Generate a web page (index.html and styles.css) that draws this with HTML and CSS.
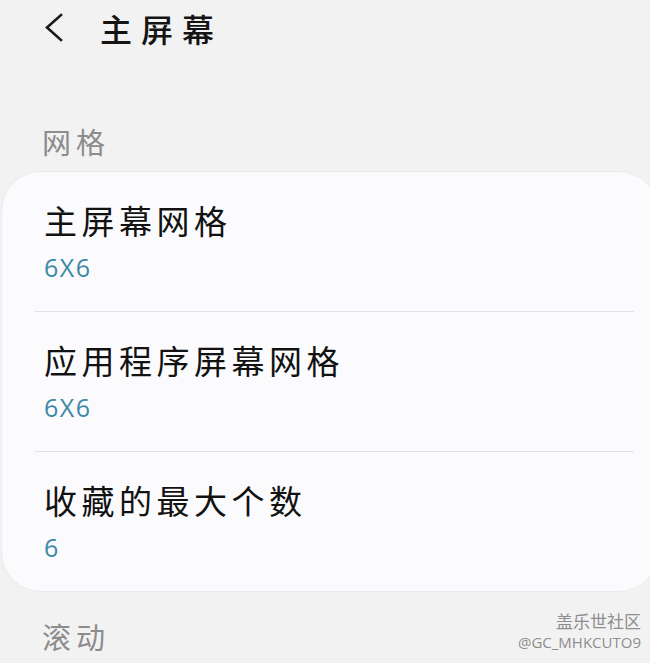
FILE: index.html
```html
<!DOCTYPE html>
<html lang="zh-CN">

<head>
    <meta charset="UTF-8">
    <meta name="viewport" content="width=device-width, initial-scale=1.0">
    <title>主屏幕</title>
    <link rel="stylesheet" href="styles.css">
</head>

<body>
    <header class="top-bar">
        <svg class="back" width="20" height="30" viewBox="0 0 20 30">
            <path d="M16 2 L2 14.5 L16 27" fill="none" stroke="#1a1a1a" stroke-width="2.6" stroke-linecap="square"/>
        </svg>
        <h1 class="page-title">主屏幕</h1>
    </header>

    <p class="section-label first">网格</p>

    <div class="card">
        <div class="item">
            <div class="item-title">主屏幕网格</div>
            <div class="item-value">6X6</div>
        </div>
        <div class="item">
            <div class="item-title">应用程序屏幕网格</div>
            <div class="item-value">6X6</div>
        </div>
        <div class="item">
            <div class="item-title">收藏的最大个数</div>
            <div class="item-value">6</div>
        </div>
    </div>

    <p class="section-label">滚动</p>

    <div class="watermark">
        <span class="wm-top">盖乐世社区</span>
        <span class="wm-bottom">@GC_MHKCUTO9</span>
    </div>
</body>

</html>
```

FILE: styles.css
```css
html, body {
    margin: 0;
    padding: 0;
}

body {
    position: relative;
    width: 650px;
    height: 663px;
    overflow: hidden;
    background-color: #f2f2f2;
    font-family: "Noto Sans CJK SC", "Noto Sans", sans-serif;
    color: #141414;
}

.top-bar {
    display: flex;
    align-items: center;
    height: 56px;
}

.back {
    margin-left: 45px;
    margin-right: 35px;
}

.page-title {
    margin: 0;
    font-size: 32px;
    font-weight: 500;
    letter-spacing: 9px;
    line-height: 40px;
}

.section-label {
    margin: 0;
    padding: 29px 0 0 42px;
    font-size: 29px;
    line-height: 30px;
    letter-spacing: 5px;
    color: #8c8c8c;
}

.section-label.first {
    padding-top: 70px;
    padding-bottom: 15px;
}

.card {
    margin-left: 1px;
    margin-right: -9px;
    background-color: #fbfbfd;
    border: 1px solid #ebebee;
    border-radius: 40px;
    padding: 0 24px 0 33px;
}

.item {
    padding: 28px 0 29px 9px;
    border-top: 1px solid #e2e2e4;
}

.item:first-child {
    border-top: none;
}

.item-title {
    font-size: 33px;
    line-height: 40px;
    letter-spacing: 4.5px;
    color: #121212;
}

.item-value {
    margin-top: 12px;
    font-family: "Open Sans", "Noto Sans", sans-serif;
    font-size: 25px;
    line-height: 30px;
    letter-spacing: 1.5px;
    color: #3b88a6;
}

.watermark {
    position: absolute;
    right: 9px;
    top: 610px;
    display: flex;
    flex-direction: column;
    align-items: flex-end;
    color: #8e8e8e;
}

.wm-top {
    font-size: 17px;
    line-height: 22px;
}

.wm-bottom {
    font-family: "Open Sans", "Noto Sans", sans-serif;
    font-size: 15px;
    line-height: 20px;
}
```
